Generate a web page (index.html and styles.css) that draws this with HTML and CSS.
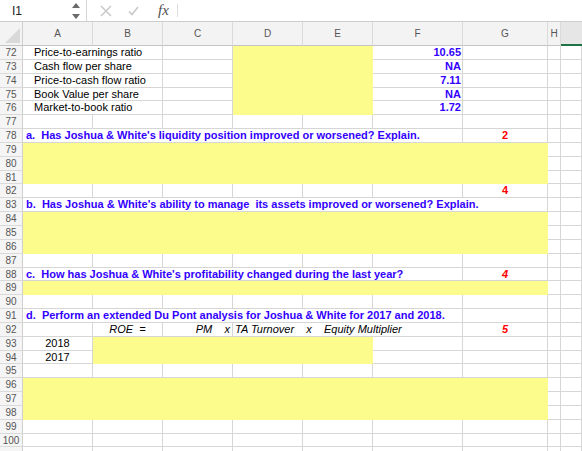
FILE: index.html
```html
<!DOCTYPE html>
<html>
<head>
<meta charset="utf-8">
<link rel="stylesheet" href="styles.css">
</head>
<body>
<div class="topbar">
  <div class="namebox">
    <span class="ref">I1</span>
    <svg class="stepper" width="8" height="18" viewBox="0 0 8 18"><polygon points="0,6 4,1 8,6" fill="#6a6a6a"/><polygon points="0,12 4,17 8,12" fill="#6a6a6a"/></svg>
  </div>
  <svg class="ico-x" width="12" height="12" viewBox="0 0 12 12"><path d="M1 1 L11 11 M11 1 L1 11" stroke="#c9c9c9" stroke-width="1.5" fill="none"/></svg>
  <svg class="ico-ok" width="11" height="10" viewBox="0 0 11 10"><path d="M1 5.5 L4 8.5 L10 1" stroke="#c9c9c9" stroke-width="1.6" fill="none"/></svg>
  <span class="fx">fx</span>
  <span class="sep"></span>
</div>
<div class="sheet">
  <div class="corner"><svg width="15" height="15" viewBox="0 0 15 15"><polygon points="0,15 15,15 15,0" fill="#d9d9d9"/></svg></div>
  <div class="ch">A</div><div class="ch">B</div><div class="ch">C</div><div class="ch">D</div><div class="ch">E</div><div class="ch">F</div><div class="ch">G</div><div class="ch">H</div><div class="ch sel"></div>

  <div class="rh">72</div><div class="c cs2 lbl">Price-to-earnings ratio</div><div class="c"></div><div class="c y cs2 rs5"></div><div class="c num">10.65</div><div class="c"></div><div class="c"></div><div class="c"></div>
  <div class="rh">73</div><div class="c cs2 lbl">Cash flow per share</div><div class="c"></div><div class="c num">NA</div><div class="c"></div><div class="c"></div><div class="c"></div>
  <div class="rh">74</div><div class="c cs2 lbl">Price-to-cash flow ratio</div><div class="c"></div><div class="c num">7.11</div><div class="c"></div><div class="c"></div><div class="c"></div>
  <div class="rh">75</div><div class="c cs2 lbl">Book Value per share</div><div class="c"></div><div class="c num">NA</div><div class="c"></div><div class="c"></div><div class="c"></div>
  <div class="rh">76</div><div class="c cs2 lbl">Market-to-book ratio</div><div class="c"></div><div class="c num">1.72</div><div class="c"></div><div class="c"></div><div class="c"></div>
  <div class="rh">77</div><div class="c"></div><div class="c"></div><div class="c"></div><div class="c"></div><div class="c"></div><div class="c"></div><div class="c"></div><div class="c"></div><div class="c"></div>
  <div class="rh">78</div><div class="c cs6 q">a.&nbsp; Has Joshua &amp; White's liquidity position improved or worsened? Explain.</div><div class="c pts">2</div><div class="c"></div><div class="c"></div>
  <div class="rh">79</div><div class="c y cs7 rs3"></div><div class="c"></div><div class="c"></div>
  <div class="rh">80</div><div class="c"></div><div class="c"></div>
  <div class="rh">81</div><div class="c"></div><div class="c"></div>
  <div class="rh">82</div><div class="c"></div><div class="c"></div><div class="c"></div><div class="c"></div><div class="c"></div><div class="c"></div><div class="c pts">4</div><div class="c"></div><div class="c"></div>
  <div class="rh">83</div><div class="c cs7 q">b.&nbsp; Has Joshua &amp; White's ability to manage&nbsp; its assets improved or worsened? Explain.</div><div class="c"></div><div class="c"></div>
  <div class="rh">84</div><div class="c y cs7 rs3"></div><div class="c"></div><div class="c"></div>
  <div class="rh">85</div><div class="c"></div><div class="c"></div>
  <div class="rh">86</div><div class="c"></div><div class="c"></div>
  <div class="rh">87</div><div class="c"></div><div class="c"></div><div class="c"></div><div class="c"></div><div class="c"></div><div class="c"></div><div class="c"></div><div class="c"></div><div class="c"></div>
  <div class="rh">88</div><div class="c cs6 q">c.&nbsp; How has Joshua &amp; White's profitability changed during the last year?</div><div class="c pts it">4</div><div class="c"></div><div class="c"></div>
  <div class="rh">89</div><div class="c y cs7"></div><div class="c"></div><div class="c"></div>
  <div class="rh">90</div><div class="c"></div><div class="c"></div><div class="c"></div><div class="c"></div><div class="c"></div><div class="c"></div><div class="c"></div><div class="c"></div><div class="c"></div>
  <div class="rh">91</div><div class="c cs6 q">d.&nbsp; Perform an extended Du Pont analysis for Joshua &amp; White for 2017 and 2018.</div><div class="c"></div><div class="c"></div><div class="c"></div>
  <div class="rh">92</div><div class="c"></div><div class="c it ctr pre">ROE  =</div><div class="c it rt pre">PM    x</div><div class="c cs3 it pre">TA Turnover    x    Equity Multiplier</div><div class="c pts it">5</div><div class="c"></div><div class="c"></div>
  <div class="rh">93</div><div class="c ctr">2018</div><div class="c y cs4 rs2"></div><div class="c"></div><div class="c"></div><div class="c"></div><div class="c"></div>
  <div class="rh">94</div><div class="c ctr">2017</div><div class="c"></div><div class="c"></div><div class="c"></div><div class="c"></div>
  <div class="rh">95</div><div class="c"></div><div class="c"></div><div class="c"></div><div class="c"></div><div class="c"></div><div class="c"></div><div class="c"></div><div class="c"></div><div class="c"></div>
  <div class="rh">96</div><div class="c y cs7 rs3"></div><div class="c"></div><div class="c"></div>
  <div class="rh">97</div><div class="c"></div><div class="c"></div>
  <div class="rh">98</div><div class="c"></div><div class="c"></div>
  <div class="rh">99</div><div class="c"></div><div class="c"></div><div class="c"></div><div class="c"></div><div class="c"></div><div class="c"></div><div class="c"></div><div class="c"></div><div class="c"></div>
  <div class="rh">100</div><div class="c"></div><div class="c"></div><div class="c"></div><div class="c"></div><div class="c"></div><div class="c"></div><div class="c"></div><div class="c"></div><div class="c"></div>
  <div class="rh"></div><div class="c"></div><div class="c"></div><div class="c"></div><div class="c"></div><div class="c"></div><div class="c"></div><div class="c"></div><div class="c"></div><div class="c"></div>
</div>
</body>
</html>
```

FILE: styles.css
```css
* { box-sizing: border-box; margin: 0; padding: 0; }
html, body { width: 582px; height: 451px; overflow: hidden; background: #fff; }
body { font-family: "Liberation Sans", Arial, sans-serif; color: #000; }

.topbar {
  display: flex;
  align-items: center;
  height: 22px;
  border-bottom: 1px solid #cdcdcd;
}
.namebox {
  width: 87px;
  height: 21px;
  display: flex;
  align-items: center;
  justify-content: space-between;
  padding: 0 6px 0 12px;
  border-right: 1px solid #d6d6d6;
  font-size: 12px;
  color: #222;
}
.stepper { display: block; }
.ico-x { margin-left: 13px; }
.ico-ok { margin-left: 16px; }
.fx {
  margin-left: 19px;
  font-family: "Liberation Serif", "Times New Roman", serif;
  font-style: italic;
  font-size: 15px;
  color: #505050;
  line-height: 15px;
}
.sep {
  margin-left: 8px;
  width: 1px;
  height: 13px;
  background: #dcdcdc;
}

.sheet {
  display: grid;
  grid-template-columns: 23px 70px 70px 70px 70px 70px 90px 85px 13px 21px;
  grid-template-rows: 24px;
  grid-auto-rows: 13.85px;
}
.corner {
  background: #f3f3f3;
  border-right: 1px solid #d0d0d0;
  border-bottom: 1px solid #c4c4c4;
  display: flex;
  align-items: flex-end;
  justify-content: flex-end;
  padding: 0 2px 2px 0;
}
.corner svg { display: block; }
.ch {
  background: #f3f3f3;
  border-right: 1px solid #dadada;
  border-bottom: 1px solid #c4c4c4;
  text-align: center;
  font-size: 10px;
  line-height: 23px;
  color: #555;
}
.ch.sel {
  background: #e6e6e6;
  border-bottom: 2px solid #1f7244;
  border-right: none;
}
.rh {
  background: #f5f5f5;
  border-right: 1px solid #cfcfcf;
  border-bottom: 1px solid #dadada;
  text-align: center;
  font-size: 10px;
  line-height: 13px;
  color: #555;
  white-space: nowrap;
}
.c {
  border-right: 1px solid #d6d6d6;
  border-bottom: 1px solid #d6d6d6;
  font-size: 11px;
  line-height: 13px;
  white-space: nowrap;
  padding: 0 2px;
  overflow: visible;
}
.y { background: #fcfc8c; border-color: #fcfc8c; }
.cs2 { grid-column: span 2; }
.cs3 { grid-column: span 3; }
.cs4 { grid-column: span 4; }
.cs6 { grid-column: span 6; }
.cs7 { grid-column: span 7; }
.rs2 { grid-row: span 2; }
.rs3 { grid-row: span 3; }
.rs5 { grid-row: span 5; }

.lbl { padding-left: 11px; }
.num { text-align: right; font-weight: bold; color: #3300ff; padding-right: 1px; }
.q { font-weight: bold; color: #3300ff; padding-left: 3px; }
.pts { text-align: center; font-weight: bold; color: #ff0000; }
.it { font-style: italic; }
.ctr { text-align: center; }
.rt { text-align: right; }
.pre { white-space: pre; }
```
